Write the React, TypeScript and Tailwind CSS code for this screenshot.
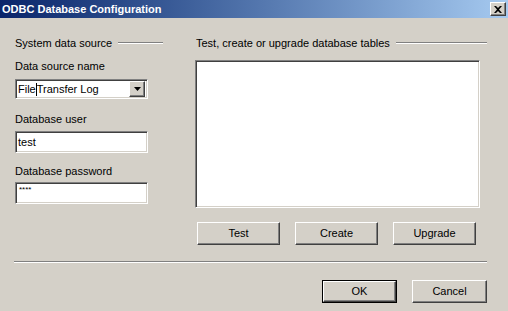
import React from 'react';

const sunken =
  'bg-white border border-t-[#808080] border-l-[#808080] border-b-white border-r-white shadow-[inset_1px_1px_0_#404040,inset_-1px_-1px_0_#d4d0c8]';
const raised =
  'bg-[#d4d0c8] border border-t-white border-l-white border-b-[#404040] border-r-[#404040] shadow-[inset_-1px_-1px_0_#808080]';

function GroupHeader({ label }: { label: string }) {
  return (
    <div className="flex items-center h-[14px]">
      <span className="whitespace-nowrap">{label}</span>
      <div className="flex-1 ml-[6px] flex flex-col">
        <div className="h-px bg-[#808080]" />
        <div className="h-px bg-white" />
      </div>
    </div>
  );
}

function Button({ label, className = '' }: { label: string; className?: string }) {
  return (
    <div className={`${raised} flex items-center justify-center ${className}`}>
      {label}
    </div>
  );
}

export default function App() {
  return (
    <div
      className="w-[508px] h-[311px] bg-[#d4d0c8] text-[11px] text-black leading-[13px] overflow-hidden"
      style={{ fontFamily: '"Liberation Sans", Arial, sans-serif' }}
    >
      {/* title bar */}
      <div className="h-[18px] flex items-center bg-gradient-to-r from-[#0a246a] to-[#a6caf0] pl-[2px] pr-[2px]">
        <span className="text-white font-bold text-[11px] flex-1">ODBC Database Configuration</span>
        <div className={`${raised} w-[16px] h-[14px] flex items-center justify-center`}>
          <svg width="8" height="7" viewBox="0 0 8 7">
            <path d="M0 0h2l2 2 2-2h2L5 3.5 8 7H6L4 5 2 7H0l3-3.5z" fill="#000" />
          </svg>
        </div>
      </div>

      <div className="flex pl-[15px] pr-[21px] pt-[18px]">
        {/* left column */}
        <div className="w-[148px] flex flex-col">
          <GroupHeader label="System data source" />
          <div className="mt-[10px]">Data source name</div>
          <div className={`${sunken} mt-[6px] h-[20px] w-[133px] flex items-center pl-[2px] pr-[2px]`}>
            <span className="flex-1 whitespace-nowrap">
              File<span className="inline-block w-px h-[13px] bg-black align-top" />Transfer Log
            </span>
            <div className={`${raised} w-[16px] h-[16px] flex items-center justify-center`}>
              <svg width="7" height="4" viewBox="0 0 7 4">
                <path d="M0 0h7L3.5 4z" fill="#000" />
              </svg>
            </div>
          </div>
          <div className="mt-[14px]">Database user</div>
          <div className={`${sunken} mt-[5px] h-[22px] w-[133px] flex items-center pl-[2px]`}>test</div>
          <div className="mt-[12px]">Database password</div>
          <div className={`${sunken} mt-[4px] h-[22px] w-[133px] flex items-start pl-[3px] pt-[2px] text-[8px] leading-[10px]`}>
            ****
          </div>
        </div>

        {/* right column */}
        <div className="flex-1 ml-[33px] flex flex-col">
          <GroupHeader label="Test, create or upgrade database tables" />
          <div className={`${sunken} mt-[10px] h-[148px] w-[285px] -ml-[1px]`} />
          <div className="flex mt-[14px] h-[23px] gap-[15px] ml-[1px]">
            <Button label="Test" className="w-[83px]" />
            <Button label="Create" className="w-[83px]" />
            <Button label="Upgrade" className="w-[83px]" />
          </div>
        </div>
      </div>

      {/* separator */}
      <div className="ml-[14px] mr-[21px] mt-[16px] flex flex-col">
        <div className="h-px bg-[#808080]" />
        <div className="h-px bg-white" />
      </div>

      <div className="flex justify-end gap-[15px] mr-[21px] mt-[17px]">
        <div className="border border-black h-[23px] w-[75px] flex">
          <Button label="OK" className="flex-1" />
        </div>
        <Button label="Cancel" className="h-[23px] w-[75px]" />
      </div>
    </div>
  );
}
